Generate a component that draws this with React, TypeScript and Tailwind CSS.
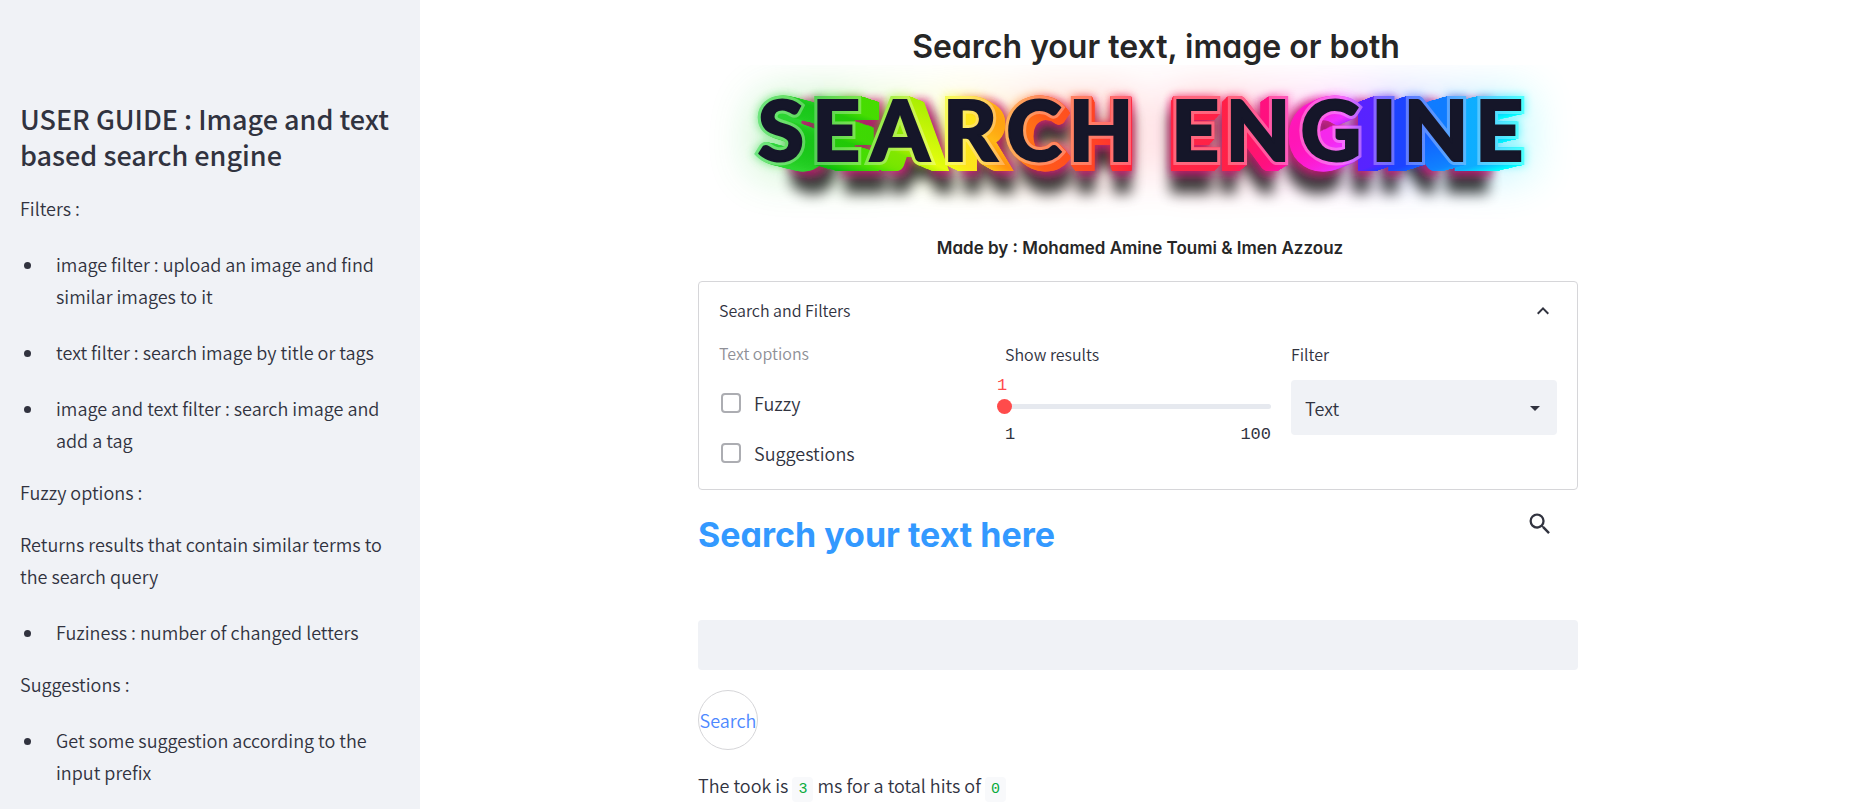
import { useState } from "react";
import { MdKeyboardArrowUp, MdArrowDropDown, MdSearch } from "react-icons/md";

const GRADIENT: [number, string][] = [
  [755, "#2fd94a"],
  [785, "#2bd42b"],
  [818, "#0cbc0c"],
  [865, "#4ce000"],
  [905, "#a0ec00"],
  [940, "#eeff10"],
  [968, "#ffe11c"],
  [1000, "#ff9a10"],
  [1040, "#ff5a1a"],
  [1090, "#ff4524"],
  [1135, "#ff1f3c"],
  [1180, "#ff2545"],
  [1235, "#ff2048"],
  [1270, "#ff1080"],
  [1310, "#ff18c8"],
  [1345, "#f030ff"],
  [1366, "#6a1cff"],
  [1398, "#2038ff"],
  [1440, "#1070ff"],
  [1470, "#10a0ff"],
  [1500, "#08d4ff"],
  [1522, "#00ffff"],
];

const LETTER_CENTERS = "781 836 900 970 1034 1101 1150 1195 1258 1331 1384 1436 1499";
const VANISH_X = 1137;
const STEPS = Array.from({ length: 20 }, (_, i) => 1 - i / 20);

/* Places a copy of the word at depth t behind the face, shrinking towards the vanishing point. */
function depth(t: number, dy: number) {
  const s = 1 - 0.066 * t;
  return `matrix(${s} 0 0 1 ${VANISH_X * (1 - s)} ${dy})`;
}

function Logo() {
  return (
    <svg viewBox="698 65 880 161" className="block w-full" role="img" aria-label="Search engine">
      <defs>
        <linearGradient id="rainbow" gradientUnits="userSpaceOnUse" x1="755" y1="0" x2="1522" y2="0">
          {GRADIENT.map(([x, c]) => (
            <stop key={x} offset={(x - 755) / 767} stopColor={c} />
          ))}
        </linearGradient>
        <filter id="glow" filterUnits="userSpaceOnUse" x="650" y="20" width="980" height="240">
          <feGaussianBlur stdDeviation="22" />
        </filter>
        <filter id="halo" filterUnits="userSpaceOnUse" x="650" y="20" width="980" height="240">
          <feGaussianBlur stdDeviation="4" />
        </filter>
        <filter id="shade" filterUnits="userSpaceOnUse" x="650" y="20" width="980" height="240">
          <feGaussianBlur stdDeviation="7" />
        </filter>
      </defs>
      <g opacity={0.22} filter="url(#glow)">
        <use href="#word" transform={depth(0, 4)} fill="url(#rainbow)" stroke="url(#rainbow)" strokeWidth={24} />
      </g>
      <g opacity={0.75} filter="url(#shade)">
        {[14, 18, 22, 26, 29].map((dy) => (
          <use key={dy} href="#word" transform={depth(1.4, dy)} fill="#000" stroke="#000" strokeWidth={7} />
        ))}
      </g>
      <g opacity={0.75} filter="url(#halo)">
        {[3, 7, 11].map((dy) => (
          <use key={dy} href="#word" transform={depth(1.25, dy)} fill="#d8127c" stroke="#d8127c" strokeWidth={8} />
        ))}
      </g>
      <g opacity={0.5} filter="url(#halo)">
        <use href="#word" fill="url(#rainbow)" stroke="url(#rainbow)" strokeWidth={10} />
      </g>
      {STEPS.map((t) => (
        <use key={t} href="#word" transform={depth(t, 6 * t)} fill="url(#rainbow)" stroke="url(#rainbow)" strokeWidth={8} />
      ))}
      <use href="#word" fill="none" stroke="url(#rainbow)" strokeWidth={8} />
      <use href="#word" fill="none" stroke="#fff" strokeOpacity={0.3} strokeWidth={8} />
      <g fill="#151629" stroke="#151629" strokeWidth={2}>
        <text id="word" x={LETTER_CENTERS} y={161} fontFamily="Lato, sans-serif" fontWeight={900} fontSize={84} textAnchor="middle">SEARCH ENGINE</text>
      </g>
    </svg>
  );
}

function Bullets({ items }: { items: string[] }) {
  return (
    <ul className="mt-6 mb-5 flex flex-col gap-6">
      {items.map((item) => (
        <li key={item} className="flex">
          <span className="mx-1 mt-[14px] h-[7px] w-[7px] shrink-0 rounded-full bg-[#31333f]" />
          <span className="ml-[21px]">{item}</span>
        </li>
      ))}
    </ul>
  );
}

function Sidebar() {
  return (
    <aside className="w-[420px] shrink-0 bg-[#f0f2f6] px-5 pt-[101px] pb-5 text-lg leading-8">
      <h1 className="mb-[19px] text-[27px] leading-9 font-medium">USER GUIDE : Image and text based search engine</h1>
      <p>Filters :</p>
      <Bullets
        items={[
          "image filter : upload an image and find similar images to it",
          "text filter : search image by title or tags",
          "image and text filter : search image and add a tag",
        ]}
      />
      <p className="mb-5">Fuzzy options :</p>
      <p>Returns results that contain similar terms to the search query</p>
      <Bullets items={["Fuziness : number of changed letters"]} />
      <p>Suggestions :</p>
      <Bullets items={["Get some suggestion according to the input prefix"]} />
    </aside>
  );
}

function Check({ label }: { label: string }) {
  return (
    <label className="flex items-center gap-[13px] px-0.5 text-lg leading-[30px]">
      <input type="checkbox" className="h-5 w-5 appearance-none rounded border-2 border-[#acadb2] bg-white checked:bg-[#ff4b4b]" />
      {label}
    </label>
  );
}

function Filters() {
  const [value, setValue] = useState(1);
  const [open, setOpen] = useState(true);
  return (
    <section className="rounded border border-[#d6d6d9]">
      <button type="button" onClick={() => setOpen(!open)} className="flex w-full items-center justify-between px-5 pt-3.5 text-base leading-7">
        Search and Filters
        <MdKeyboardArrowUp className="mt-0.5 mr-0.5 h-6 w-6" />
      </button>
      {open && (
        <div className="grid grid-cols-3 gap-5 px-5 pt-4 pb-[21px]">
          <div>
            <p className="pt-px text-base leading-6 text-[#8f9097]">Text options</p>
            <div className="mt-[23px] flex flex-col gap-5">
              <Check label="Fuzzy" />
              <Check label="Suggestions" />
            </div>
          </div>
          <div>
            <label htmlFor="results" className="block pt-0.5 text-base leading-6">Show results</label>
            <div className="-ml-2 pt-2 font-['Liberation_Mono',monospace] text-[17px] leading-6 text-[#ff4b4b]">{value}</div>
            <div className="relative mt-1.5 h-[5px] rounded-full bg-[#e6e9ef]">
              <input
                id="results"
                type="range"
                min={1}
                max={100}
                value={value}
                onChange={(e) => setValue(Number(e.target.value))}
                className="absolute -top-[5px] -left-2 h-[15px] w-[calc(100%+16px)] appearance-none bg-transparent [&::-webkit-slider-thumb]:h-[15px] [&::-webkit-slider-thumb]:w-[15px] [&::-webkit-slider-thumb]:appearance-none [&::-webkit-slider-thumb]:rounded-full [&::-webkit-slider-thumb]:bg-[#ff4b4b]"
              />
            </div>
            <div className="flex justify-between pt-3.5 font-['Liberation_Mono',monospace] text-[17px] leading-6">
              <span>1</span>
              <span>100</span>
            </div>
          </div>
          <div>
            <label htmlFor="filter" className="block pt-0.5 text-base leading-6">Filter</label>
            <div className="relative mt-3.5">
              <select id="filter" className="block h-[55px] w-full appearance-none rounded bg-[#f0f2f6] px-3.5 text-lg">
                <option>Text</option>
                <option>Image</option>
                <option>Image and text</option>
              </select>
              <MdArrowDropDown className="pointer-events-none absolute top-4 right-2.5 h-6 w-6" />
            </div>
          </div>
        </div>
      )}
    </section>
  );
}

function Code({ children }: { children: string }) {
  return (
    <code className="rounded bg-[#f8f9fb] px-1.5 py-1 font-['Liberation_Mono',monospace] text-[15px] text-[#09ab3b]">{children}</code>
  );
}

export default function App() {
  return (
    <div className="flex min-h-screen bg-white font-['Noto_Sans_CJK_SC','Noto_Sans',sans-serif] font-[350] text-[#31333f]">
      <Sidebar />
      <main className="min-w-0 flex-1">
        <div className="mx-auto max-w-[880px]">
          <header className="text-center font-['Inter',sans-serif] text-[#262626] [font-feature-settings:'cv11']">
            <h2 className="pt-[29px] pl-9 text-[32px] leading-9 font-semibold">Search your text, image or both</h2>
            <Logo />
            <p className="pt-2.5 pl-1 text-[17px] leading-6 font-semibold">Made by : Mohamed Amine Toumi &amp; Imen Azzouz</p>
          </header>
          <div className="pt-[21px]">
            <Filters />
          </div>
          <div className="flex items-start justify-between pt-5">
            <h2 className="pt-[5px] font-['Inter',sans-serif] text-[34px] leading-10 font-bold text-[#3399ff] [font-feature-settings:'cv11']">Search your text here</h2>
            <MdSearch className="mr-6 h-7 w-7" />
          </div>
          <input aria-label="Search text" type="text" className="mt-[65px] block h-[50px] w-full rounded bg-[#f0f2f6] px-4 text-lg outline-none" />
          <button type="button" className="mt-5 flex h-[60px] w-[60px] items-center justify-center rounded-full border border-[#d6d6d9] text-lg text-[#4d88ff]">
            Search
          </button>
          <p className="mt-[19px] text-lg leading-8">
            The took is <Code>3</Code> ms for a total hits of <Code>0</Code>
          </p>
        </div>
      </main>
    </div>
  );
}
